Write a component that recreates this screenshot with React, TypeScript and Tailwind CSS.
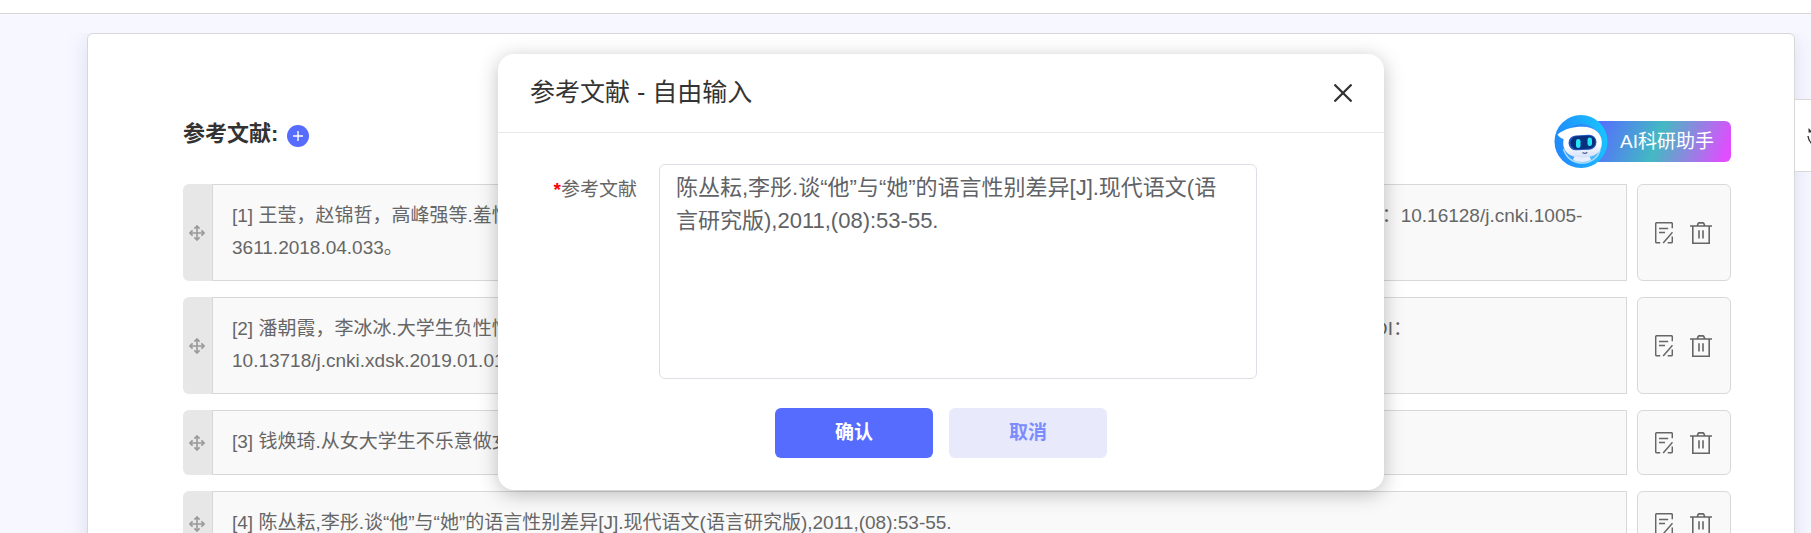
import { useState } from 'react';

const fontStack = "font-['Liberation_Sans','Noto_Sans_CJK_SC',sans-serif]";

const references = [
  {
    id: 1,
    text: '王莹，赵锦哲，高峰强等.羞怯大学生对负性情绪面孔的注意偏向特点及其干预研究[J].中国临床心理学杂志,2018, 26(04): 785-789. DOI：10.16128/j.cnki.1005-3611.2018.04.033。',
  },
  {
    id: 2,
    text: '潘朝霞，李冰冰.大学生负性情绪与语言表达的性别差异及其影响因素实证研究[J].西南大学学报(社会科学版),2019, 45(01): 114-122. DOI：10.13718/j.cnki.xdsk.2019.01.013。',
  },
  { id: 3, text: '钱焕琦.从女大学生不乐意做女生谈起[J].江苏高教,2004,(01):97-99.' },
  { id: 4, text: '陈丛耘,李彤.谈“他”与“她”的语言性别差异[J].现代语文(语言研究版),2011,(08):53-55.' },
];

function MoveIcon() {
  return (
    <svg viewBox="0 0 16 16" className="w-4 h-4" fill="none" stroke="#999" strokeWidth="1.6">
      <path d="M8 1v14M1 8h14" />
      <path d="M5.4 3.6 8 1l2.6 2.6M5.4 12.4 8 15l2.6-2.6M3.6 5.4 1 8l2.6 2.6M12.4 5.4 15 8l-2.6 2.6" />
    </svg>
  );
}

function EditIcon() {
  return (
    <svg viewBox="0 0 18 22" className="w-[18px] h-[22px]" fill="none" stroke="#666" strokeWidth="1.5">
      <path d="M5.2 20.8H1.7a1 1 0 0 1-1-1V1.7a1 1 0 0 1 1-1h14.6a1 1 0 0 1 1 1v4.6" />
      <path d="M4 6.5h9.2M4 10.4h6M17.5 10.2 8.2 20.9M17.3 14.6v5.2a1 1 0 0 1-1 1h-3.6" />
    </svg>
  );
}

function TrashIcon() {
  return (
    <svg viewBox="0 0 22 22" className="w-[22px] h-[22px]" fill="none" stroke="#666" strokeWidth="1.6">
      <path d="M0 4h22M2.8 4v17.2h16.4V4M7.2 4l.9-2.4c.2-.5.5-.7 1-.7h3.8c.5 0 .8.2 1 .7l.9 2.4" />
      <path d="M9 8.2v8.4M13 8.2v8.4" />
    </svg>
  );
}

function RobotIcon() {
  return (
    <svg viewBox="0 0 54 54" className="w-[54px] h-[54px]">
      <defs>
        <linearGradient id="ring" x1="0" y1="0.6" x2="1" y2="0.4">
          <stop offset="0" stopColor="#2187fb" />
          <stop offset="1" stopColor="#18c4ff" />
        </linearGradient>
        <linearGradient id="inner" x1="0" y1="0" x2="1" y2="1">
          <stop offset="0" stopColor="#1b78f5" />
          <stop offset="1" stopColor="#5cc8ff" />
        </linearGradient>
        <linearGradient id="head" x1="0.4" y1="0" x2="0.5" y2="1">
          <stop offset="0.6" stopColor="#fff" />
          <stop offset="1" stopColor="#d3dffb" />
        </linearGradient>
      </defs>
      <circle cx="27" cy="26.5" r="26.5" fill="url(#ring)" />
      <circle cx="28" cy="29" r="20" fill="url(#inner)" />
      <path d="M9.5 34c2.5 9 10 14 18.5 14s16-5 18-13" fill="none" stroke="#a9dcff" strokeWidth="1.4" />
      <path d="M21 40h14l2 5c-5 2.5-13 2.5-18 0z" fill="#e6eeff" />
      <path
        d="M3.5 19.5C11 13.5 20 11.5 29 11.8c11 .3 18.5 6 18.8 15.2.3 10-6 15-18 15.5-11 .4-18-3-20-10.5-.8-3.2-.5-5.5-.2-8-2-.6-4.6-2-6.1-4.5z"
        fill="url(#head)"
      />
      <rect x="14.5" y="20" width="28" height="15" rx="7.5" fill="#2459c8" transform="rotate(-3 29 27.5)" />
      <rect x="16.5" y="21" width="25" height="13" rx="6.5" fill="#07307f" transform="rotate(-3 29 27.5)" />
      <rect x="22" y="24" width="4.5" height="9" rx="2.2" fill="#25e4f7" />
      <rect x="33.5" y="22.5" width="4.5" height="8.5" rx="2.2" fill="#25e4f7" />
      <path d="M28.5 37.5c1.5 1 3.5.9 4.8-.3" fill="none" stroke="#53628c" strokeWidth="1.3" />
    </svg>
  );
}

function ReferenceRow({ id, text }: { id: number; text: string }) {
  return (
    <li className="flex">
      <button aria-label="拖动排序" className="w-[29px] shrink-0 flex items-center justify-center rounded-l-md bg-[#e7e7e7] pr-0.5">
        <MoveIcon />
      </button>
      <p className="flex-1 min-w-0 border border-[#d8d8d8] bg-[#f9f9f9] px-[19px] pt-[15px] pb-4 text-[19px] leading-8 text-[#666]">
        {`[${id}] ${text}`}
      </p>
      <div className="ml-2.5 w-[94px] shrink-0 flex items-center justify-center gap-[17px] rounded-md border border-[#d8d8d8] bg-[#f9f9f9] pr-0.5">
        <button aria-label="编辑"><EditIcon /></button>
        <button aria-label="删除"><TrashIcon /></button>
      </div>
    </li>
  );
}

function InputDialog({ onClose }: { onClose: () => void }) {
  const [value, setValue] = useState(references[3].text);

  return (
    <div
      role="dialog"
      aria-labelledby="dialog-title"
      className="absolute top-5 left-1/2 -translate-x-1/2 w-[886px] max-w-full rounded-2xl bg-white shadow-[0_4px_20px_rgba(0,0,0,0.25)]"
    >
      <div className="flex items-center justify-between h-[79px] px-8 pb-px border-b border-[#e8e8e8]">
        <h2 id="dialog-title" className="text-[25px] text-[#333]">参考文献 - 自由输入</h2>
        <button aria-label="关闭" onClick={onClose}>
          <svg viewBox="0 0 18 18" className="w-[18px] h-[18px]" fill="none" stroke="#333" strokeWidth="2.3" strokeLinecap="round">
            <path d="M1.2 1.2l15.6 15.6M16.8 1.2 1.2 16.8" />
          </svg>
        </button>
      </div>
      <div className="flex items-start pt-[31px] pr-[127px]">
        <label htmlFor="reference" className="w-[161px] shrink-0 pt-2.5 pr-[22px] text-right text-[19px] leading-8 text-[#666]">
          <span className="font-bold text-[#f00]">*</span>参考文献
        </label>
        <textarea
          id="reference"
          value={value}
          onChange={(e) => setValue(e.target.value)}
          className="flex-1 min-w-0 h-[215px] resize-none rounded-md border border-[#dcdfe6] bg-white pl-4 pr-6 py-1.5 text-[22px] leading-[33px] text-[#606266] outline-none"
        />
      </div>
      <div className="flex justify-center gap-4 pt-[29px] pb-8 text-[19px]">
        <button onClick={onClose} className="w-[158px] h-[50px] rounded-md bg-[#566cff] font-bold text-white">确认</button>
        <button onClick={onClose} className="w-[158px] h-[50px] rounded-md bg-[#e8eafc] font-bold text-[#7b8cff]">取消</button>
      </div>
    </div>
  );
}

export default function App() {
  const [open, setOpen] = useState(true);

  return (
    <div className={`h-screen overflow-hidden flex flex-col bg-[#f7f8ff] ${fontStack}`}>
      <header className="h-3.5 shrink-0 border-b border-[#d8d8d8] bg-white" />
      <div className="flex-1 min-h-0 mt-[19px] pl-[87px] flex items-start overflow-hidden">
        <main className="relative flex-1 min-w-0 rounded-md border border-[#d8d8d8] bg-white pt-20 pl-[95px] pr-[63px] pb-16 shadow-[0_4px_24px_rgba(60,60,140,0.14)]">
          <div className="flex items-center justify-between h-[55px]">
            <div className="flex items-center gap-[9px] pb-4">
              <h1 className="text-[22px] font-bold text-[#333]">参考文献:</h1>
              <button aria-label="添加参考文献" onClick={() => setOpen(true)} className="mt-1 flex items-center justify-center w-[22px] h-[22px] rounded-full bg-[#566cff]">
                <svg viewBox="0 0 10 10" className="w-2.5 h-2.5" stroke="#fff" strokeWidth="1.4">
                  <path d="M5 0v10M0 5h10" />
                </svg>
              </button>
            </div>
            <button className="flex items-center">
              <span className="relative -mr-2.5"><RobotIcon /></span>
              <span className="h-[41px] pl-[22px] pr-[17px] rounded-r-md bg-linear-[110deg,#566cff_0%,#43b9c3_45%,#e14dff_95%] text-[19px] leading-[41px] text-white">
                AI科研助手
              </span>
            </button>
          </div>
          <ul className="mt-[15px] flex flex-col gap-4">
            {references.map((item) => (
              <ReferenceRow key={item.id} id={item.id} text={item.text} />
            ))}
          </ul>
          {open && <InputDialog onClose={() => setOpen(false)} />}
        </main>
        <aside className="relative w-4 shrink-0 mt-[66px]">
          <button aria-label="刷新" className="w-full h-[73px] flex items-center pl-3 overflow-hidden border-y border-[#d8d8d8] bg-white">
            <svg viewBox="0 0 24 24" className="w-6 h-6 shrink-0" fill="none" stroke="#333" strokeWidth="1.4">
              <path d="M1.5 4v4.5H6z" fill="#333" strokeWidth="0" />
              <path d="M5 7.5a9 9 0 0 1 16 2M1 12c.3 3.2 1.6 5.8 4 8 4 3 12 3 16-3" />
            </svg>
          </button>
        </aside>
      </div>
    </div>
  );
}
